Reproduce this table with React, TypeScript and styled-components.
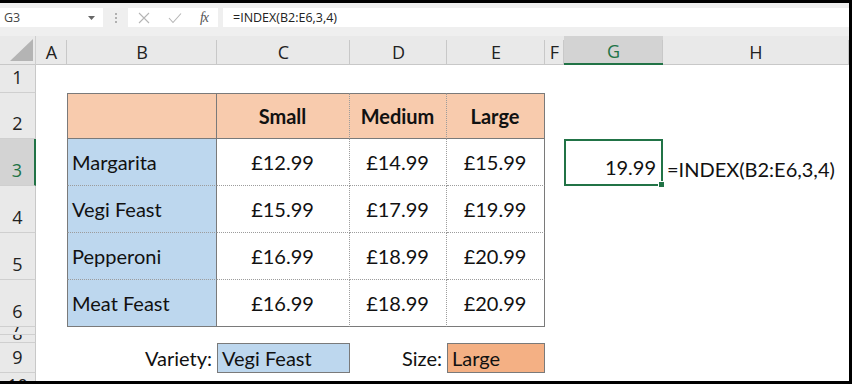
import { FC } from 'react';
import styled, { createGlobalStyle, css } from 'styled-components';

const GlobalStyle = createGlobalStyle`
  html, body {
    margin: 0;
    padding: 0;
    background: #000;
  }
  * {
    box-sizing: border-box;
  }
`;

const SOLID = '1px solid #7a7a7a';
const DOTTED = '1px dotted #9c9c9c';
const PEACH = '#f8cbad';
const BLUE = '#bdd7ee';
const ORANGE = '#f4b084';

type Align = 'left' | 'center' | 'right';

interface ICell {
  text?: string;
  fill?: string;
  align?: Align;
  bold?: boolean;
  bottomAligned?: boolean;
  selected?: boolean;
  top?: string;
  right?: string;
  bottom?: string;
  left?: string;
}

interface IRow {
  label: string;
  height: string;
  // hidden rows are squashed to a sliver; 'top' shows the top of the number
  sliver?: 'top' | 'bottom';
  active?: boolean;
  cells?: Record<string, ICell>;
}

const COLUMNS = ['A', 'B', 'C', 'D', 'E', 'F', 'G', 'H'];

const pizzas = [
  ['Margarita', '£12.99', '£14.99', '£15.99'],
  ['Vegi Feast', '£15.99', '£17.99', '£19.99'],
  ['Pepperoni', '£16.99', '£18.99', '£20.99'],
  ['Meat Feast', '£16.99', '£18.99', '£20.99']
];

const pizzaRows: IRow[] = pizzas.map((p, i) => {
  const last = i === pizzas.length - 1;
  const bottom = last ? SOLID : DOTTED;
  const cells: Record<string, ICell> = {
    B: { text: p[0], fill: BLUE, left: SOLID, right: SOLID, bottom },
    C: { text: p[1], align: 'center', right: DOTTED, bottom },
    D: { text: p[2], align: 'center', right: DOTTED, bottom },
    E: { text: p[3], align: 'center', right: SOLID, bottom }
  };
  if (i === 0) {
    cells.G = { text: '19.99', align: 'right', bottomAligned: true, selected: true };
    cells.H = { text: '=INDEX(B2:E6,3,4)', bottomAligned: true };
  }
  return { label: String(i + 3), height: '47px', active: i === 0, cells };
});

const rows: IRow[] = [
  { label: '1', height: '28px' },
  {
    label: '2',
    height: '46px',
    cells: {
      B: { fill: PEACH, top: SOLID, left: SOLID, right: SOLID, bottom: SOLID },
      C: { text: 'Small', fill: PEACH, align: 'center', bold: true, top: SOLID, right: DOTTED, bottom: SOLID },
      D: { text: 'Medium', fill: PEACH, align: 'center', bold: true, top: SOLID, right: DOTTED, bottom: SOLID },
      E: { text: 'Large', fill: PEACH, align: 'center', bold: true, top: SOLID, right: SOLID, bottom: SOLID }
    }
  },
  ...pizzaRows,
  { label: '7', height: '8px', sliver: 'bottom' },
  { label: '8', height: '8px', sliver: 'bottom' },
  {
    label: '9',
    height: '30px',
    cells: {
      B: { text: 'Variety:', align: 'right' },
      C: { text: 'Vegi Feast', fill: BLUE, top: SOLID, right: SOLID, bottom: SOLID, left: SOLID },
      D: { text: 'Size:', align: 'right' },
      E: { text: 'Large', fill: ORANGE, top: SOLID, right: SOLID, bottom: SOLID, left: SOLID }
    }
  },
  { label: '10', height: '1fr', sliver: 'top' }
];

const App: FC = () => {
  return (
    <>
      <GlobalStyle />
      <Frame>
        <Screen>
          <FormulaBar>
            <NameBox>
              <span>G3</span>
              <svg width="7" height="4" viewBox="0 0 7 4">
                <path d="M0 0 L7 0 L3.5 4 Z" fill="#666" />
              </svg>
            </NameBox>
            <Grip>
              <i />
              <i />
              <i />
            </Grip>
            <FuncBox>
              <svg width="12" height="12" viewBox="0 0 12 12">
                <path d="M1 1 L11 11 M11 1 L1 11" stroke="#b5b5b5" strokeWidth="1.1" />
              </svg>
              <svg width="14" height="12" viewBox="0 0 14 12">
                <path d="M1 6 L5 10.5 L13 1.5" stroke="#b5b5b5" strokeWidth="1.1" fill="none" />
              </svg>
              <Fx>fx</Fx>
            </FuncBox>
            <FormulaInput>=INDEX(B2:E6,3,4)</FormulaInput>
          </FormulaBar>

          <Sheet $rows={['29px', ...rows.map((r) => r.height)].join(' ')}>
            <Corner>
              <svg width="23" height="22" viewBox="0 0 23 22">
                <path d="M23 0 L23 22 L0 22 Z" fill="#b4b4b4" />
              </svg>
            </Corner>
            {COLUMNS.map((c) => (
              <ColHead key={c} $active={c === 'G'}>
                {c}
              </ColHead>
            ))}

            {rows.map((row) => (
              <RowFragment key={row.label} row={row} />
            ))}
          </Sheet>
        </Screen>
      </Frame>
    </>
  );
};

const RowFragment: FC<{ row: IRow }> = ({ row }) => (
  <>
    <RowHead $active={row.active} $sliver={row.sliver}>
      <span>{row.label}</span>
    </RowHead>
    {COLUMNS.map((c) => {
      const cell = row.cells?.[c] || {};
      return (
        <Cell
          key={c}
          $fill={cell.fill}
          $align={cell.align || 'left'}
          $bold={cell.bold}
          $bottomAligned={cell.bottomAligned}
          $selected={cell.selected}
          $top={cell.top}
          $right={cell.right}
          $bottom={cell.bottom}
          $left={cell.left}
        >
          {cell.text}
        </Cell>
      );
    })}
  </>
);

const Frame = styled.div`
  width: 852px;
  height: 384px;
  background: #000;
  padding: 3px 3px 3px 0;
`;

const Screen = styled.div`
  width: 100%;
  height: 100%;
  background: #fff;
  display: flex;
  flex-direction: column;
  overflow: hidden;
`;

const FormulaBar = styled.div`
  height: 33px;
  flex: none;
  background: #efefef;
  display: flex;
  align-items: flex-start;
  padding-top: 5px;
  font-family: 'Open Sans', 'Noto Sans', sans-serif;
  font-size: 12.5px;
  color: #333;
`;

const NameBox = styled.div`
  width: 103px;
  height: 19px;
  background: #fff;
  display: flex;
  align-items: center;
  justify-content: space-between;
  padding: 0 8px 0 4px;
  color: #444;
`;

const Grip = styled.div`
  width: 25px;
  height: 19px;
  display: flex;
  flex-direction: column;
  align-items: center;
  justify-content: center;
  gap: 2px;

  i {
    display: block;
    width: 2px;
    height: 2px;
    background: #b0b0b0;
  }
`;

const FuncBox = styled.div`
  width: 90px;
  height: 19px;
  background: #fff;
  display: flex;
  align-items: center;
  justify-content: space-between;
  padding: 0 10px 0 10px;
`;

const Fx = styled.span`
  font-family: 'Liberation Serif', 'DejaVu Serif', serif;
  font-style: italic;
  font-size: 14px;
  color: #555;
  letter-spacing: -1px;
`;

const FormulaInput = styled.div`
  flex: 1;
  height: 19px;
  margin-left: 5px;
  background: #fff;
  display: flex;
  align-items: center;
  padding-left: 10px;
  color: #222;
`;

const Sheet = styled.div<{ $rows: string }>`
  flex: 1;
  display: grid;
  grid-template-columns: 36px 31px 150px 133px 97px 98px 19px 99px 1fr;
  grid-template-rows: ${(p) => p.$rows};
  font-family: 'Lato', 'Liberation Sans', sans-serif;
  font-size: 20px;
  color: #111;
`;

const headBase = css`
  background: #e9e9e9;
  font-family: 'Open Sans', 'Noto Sans', sans-serif;
  font-size: 18px;
  color: #222;
  display: flex;
  justify-content: center;
  overflow: hidden;
`;

const Corner = styled.div`
  ${headBase};
  border-right: 1px solid #cfcfcf;
  border-bottom: 1px solid #c8c8c8;
  align-items: flex-end;
  justify-content: flex-end;
  padding: 0 2px 3px 0;
`;

const ColHead = styled.div<{ $active?: boolean }>`
  ${headBase};
  align-items: center;
  padding-top: 3px;
  border-bottom: 1px solid #c8c8c8;
  position: relative;

  &::after {
    content: '';
    position: absolute;
    right: 0;
    top: 4px;
    bottom: 0;
    width: 1px;
    background: #c8c8c8;
  }

  ${(p) =>
    p.$active &&
    css`
      background: #d3d3d3;
      color: #217346;
      border-bottom: 2px solid #217346;
    `}
`;

const RowHead = styled.div<{ $active?: boolean; $sliver?: 'top' | 'bottom' }>`
  ${headBase};
  align-items: ${(p) => (p.$sliver === 'top' ? 'flex-start' : 'flex-end')};
  padding-bottom: ${(p) => (p.$sliver ? '0' : '3px')};
  padding-top: ${(p) => (p.$sliver === 'top' ? '3px' : '0')};
  border-right: 1px solid #c8c8c8;
  border-bottom: ${(p) => (p.$sliver === 'top' ? 'none' : '1px solid #cfcfcf')};

  span {
    line-height: ${(p) => (p.$sliver ? '18px' : 'normal')};
    flex: none;
  }

  ${(p) =>
    p.$active &&
    css`
      background: #d3d3d3;
      color: #217346;
      border-right: 2px solid #217346;
    `}
`;

const Cell = styled.div<{
  $fill?: string;
  $align: Align;
  $bold?: boolean;
  $bottomAligned?: boolean;
  $selected?: boolean;
  $top?: string;
  $right?: string;
  $bottom?: string;
  $left?: string;
}>`
  position: relative;
  display: flex;
  align-items: ${(p) => (p.$bottomAligned ? 'flex-end' : 'center')};
  justify-content: ${(p) =>
    p.$align === 'center' ? 'center' : p.$align === 'right' ? 'flex-end' : 'flex-start'};
  padding: ${(p) => (p.$bottomAligned ? '0 5px 5px 4px' : '0 5px 0 4px')};
  background: ${(p) => p.$fill || 'transparent'};
  font-weight: ${(p) => (p.$bold ? 700 : 400)};
  white-space: nowrap;
  border-top: ${(p) => p.$top || 'none'};
  border-right: ${(p) => p.$right || 'none'};
  border-bottom: ${(p) => p.$bottom || 'none'};
  border-left: ${(p) => p.$left || 'none'};

  ${(p) =>
    p.$selected &&
    css`
      border: 2px solid #217346;
      z-index: 1;

      &::after {
        content: '';
        position: absolute;
        right: -4px;
        bottom: -4px;
        width: 5px;
        height: 5px;
        background: #217346;
        border: 1px solid #fff;
      }
    `}
`;

export default App;
